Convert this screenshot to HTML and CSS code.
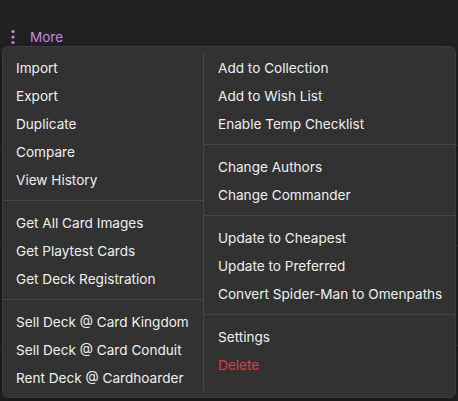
FILE: index.html
```html
<!DOCTYPE html>
<html>
<head>
<meta charset="utf-8">
<link rel="stylesheet" href="styles.css">
</head>
<body>
<div class="page">
  <div class="toolbar">
    <button class="more-btn">
      <svg class="dots" width="6" height="16" viewBox="0 0 6 16"><circle cx="3" cy="2.5" r="1.6"/><circle cx="3" cy="8" r="1.6"/><circle cx="3" cy="13.5" r="1.6"/></svg>
      <span>More</span>
    </button>
  </div>
  <div class="content">
    <div class="bg-row"></div>
    <div class="bg-row"></div>
    <div class="bg-row"></div>
    <div class="bg-footer">
      <span class="visits">+ Three Visits</span>
      <span class="icons">
        <svg width="14" height="10" viewBox="0 0 14 10"><path d="M2 2 L7 7 L12 2" fill="none" stroke="#8a8a8a" stroke-width="1.4"/></svg>
        <svg width="14" height="10" viewBox="0 0 14 10"><path d="M2 2 L7 7 L12 2" fill="none" stroke="#8a8a8a" stroke-width="1.4"/></svg>
      </span>
    </div>
  </div>

  <div class="menu">
    <div class="col">
      <div class="group">
        <div class="item">Import</div>
        <div class="item">Export</div>
        <div class="item">Duplicate</div>
        <div class="item">Compare</div>
        <div class="item">View History</div>
      </div>
      <div class="sep"></div>
      <div class="group">
        <div class="item">Get All Card Images</div>
        <div class="item">Get Playtest Cards</div>
        <div class="item">Get Deck Registration</div>
      </div>
      <div class="sep"></div>
      <div class="group">
        <div class="item">Sell Deck @ Card Kingdom</div>
        <div class="item">Sell Deck @ Card Conduit</div>
        <div class="item">Rent Deck @ Cardhoarder</div>
      </div>
    </div>
    <div class="vsep"></div>
    <div class="col right">
      <div class="group">
        <div class="item">Add to Collection</div>
        <div class="item">Add to Wish List</div>
        <div class="item">Enable Temp Checklist</div>
      </div>
      <div class="sep"></div>
      <div class="group">
        <div class="item">Change Authors</div>
        <div class="item">Change Commander</div>
      </div>
      <div class="sep"></div>
      <div class="group">
        <div class="item">Update to Cheapest</div>
        <div class="item">Update to Preferred</div>
        <div class="item">Convert Spider-Man to Omenpaths</div>
      </div>
      <div class="sep"></div>
      <div class="group">
        <div class="item">Settings</div>
        <div class="item danger">Delete</div>
      </div>
    </div>
  </div>
</div>
</body>
</html>
```

FILE: styles.css
```css
* { box-sizing: border-box; }
html, body {
  margin: 0;
  padding: 0;
  background: #222222;
  font-family: Inter, "Noto Sans", "Liberation Sans", sans-serif;
  color: #f2f2f2;
}
.page {
  position: relative;
  width: 458px;
  height: 401px;
  overflow: hidden;
}
.toolbar {
  height: 46px;
  padding: 29px 0 0 10px;
}
.more-btn {
  display: flex;
  align-items: center;
  gap: 14px;
  background: none;
  border: none;
  padding: 0;
  font: inherit;
  font-size: 13.5px;
  color: #c48de4;
}
.dots { fill: #c48de4; }
.content {
  display: flex;
  flex-direction: column;
}
.bg-row {
  height: 100px;
  border-bottom: 1px solid #3a3a3a;
}
.bg-footer {
  display: flex;
  justify-content: space-between;
  padding: 140px 25px 0 173px;
  font-size: 13px;
  color: #cfcfcf;
}
.icons { display: flex; gap: 16px; }

.menu {
  position: absolute;
  top: 46px;
  left: 2px;
  width: 454px;
  height: 352px;
  background: #323232;
  border: 1px solid #3c3c3c;
  border-radius: 6px;
  box-shadow: 0 4px 14px rgba(0,0,0,0.45);
  display: grid;
  grid-template-columns: 200px 1px 1fr;
}
.col {
  display: flex;
  flex-direction: column;
  padding-top: 7px;
}
.vsep {
  background: #464646;
  margin: 6px 0;
}
.group {
  display: flex;
  flex-direction: column;
}
.item {
  height: 28px;
  line-height: 28px;
  padding-left: 13px;
  font-size: 13.6px;
  color: #f0f0f0;
  white-space: nowrap;
}
.right .item { padding-left: 14px; }
.danger { color: #e0394a !important; }
.sep {
  height: 1px;
  background: #464646;
  margin: 6px 0 8px;
}
```
